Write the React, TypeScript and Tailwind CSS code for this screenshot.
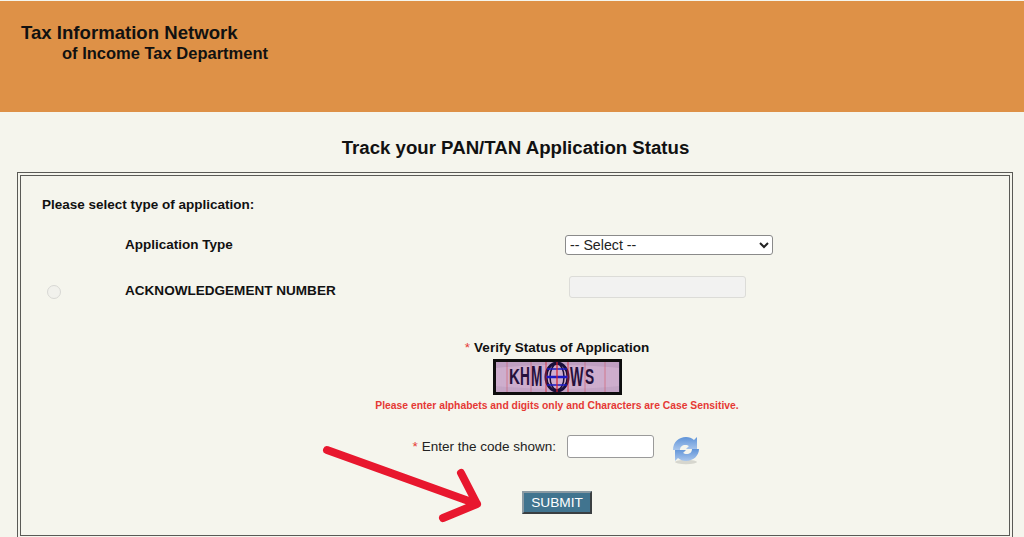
import type { FC } from "react";

const fontStack = "font-['Liberation_Sans',Arial,sans-serif]";

// distorted captcha picture
const Captcha: FC = () => {
  const vLines = Array.from({ length: 62 }, (_, i) => i * 2);
  const hLines = Array.from({ length: 15 }, (_, i) => i * 2);
  const letter = "'Liberation Sans', sans-serif";
  return (
    <svg width="129" height="36" viewBox="0 0 129 36" className="block">
      <rect x="0" y="0" width="129" height="36" fill="#0d0d0d" />
      <rect x="3" y="3" width="123" height="30" fill="#e4d6ea" />
      {vLines.map((x) => (
        <line key={`v${x}`} x1={x + 4} y1="3" x2={x + 4} y2="33" stroke="#8078cc" strokeWidth="0.8" opacity="0.5" />
      ))}
      {hLines.map((y) => (
        <line key={`h${y}`} x1="3" y1={y + 4} x2="126" y2={y + 4} stroke="#c8506c" strokeWidth="0.8" opacity="0.45" />
      ))}
      {[14, 38, 92, 112].map((x) => (
        <line key={`r${x}`} x1={x} y1="3" x2={x} y2="33" stroke="#d8404a" strokeWidth="0.8" opacity="0.6" />
      ))}
      <path d="M3 3H126V9C90 5 40 5 3 9Z" fill="#8d6f98" opacity="0.22" />
      <path d="M3 33H126V27C90 31 40 31 3 27Z" fill="#8d6f98" opacity="0.15" />
      <g fontFamily={letter} fontWeight="700" fill="#26103c">
        <text transform="translate(16 25) scale(0.8 1.15)" fontSize="19">K</text>
        <text transform="translate(27 26) scale(0.72 1.35)" fontSize="19">H</text>
        <text transform="translate(38 27) scale(0.72 1.55)" fontSize="19">M</text>
        <text transform="translate(77 27) scale(0.75 1.5)" fontSize="19">W</text>
        <text transform="translate(92 25) scale(0.72 1.15)" fontSize="19">S</text>
      </g>
      <ellipse cx="64" cy="18" rx="11" ry="14" fill="none" stroke="#1a0f3a" strokeWidth="3" />
      <ellipse cx="64" cy="18" rx="7" ry="13" fill="none" stroke="#1a0f3a" strokeWidth="1.5" />
      <line x1="53" y1="18" x2="75" y2="18" stroke="#1a1ac4" strokeWidth="2.5" />
      <line x1="54" y1="10" x2="74" y2="10" stroke="#1a1ac4" strokeWidth="1.5" />
      <line x1="54" y1="26" x2="74" y2="26" stroke="#1a1ac4" strokeWidth="1.5" />
      <line x1="53" y1="3" x2="53" y2="33" stroke="#d8202a" strokeWidth="0.8" />
      <line x1="64" y1="3" x2="64" y2="33" stroke="#d8202a" strokeWidth="1.2" />
      <line x1="75" y1="3" x2="75" y2="33" stroke="#d8202a" strokeWidth="0.8" />
    </svg>
  );
};

const RefreshIcon: FC = () => (
  <svg width="28" height="30" viewBox="0 0 28 30" className="block">
    <defs>
      <linearGradient id="refreshTop" x1="0" y1="0" x2="0" y2="1">
        <stop offset="0" stopColor="#5f93d8" />
        <stop offset="1" stopColor="#a9c6ec" />
      </linearGradient>
    </defs>
    <ellipse cx="14" cy="27" rx="11" ry="2.2" fill="#8d8d88" opacity="0.3" />
    <path d="M1 15C1 7 7 2 14 2c3 0 6 1 8 3l3-3v12H14l3-3C16 10.500 15 10 13.500 10 10 10 8 12 8 15Z" fill="url(#refreshTop)" />
    <path d="M27 14c0 7-6 12-13 12-3 0-6-1-8-3l-3 3V15h11l-3 3c1 .500 2 1 3.500 1 3.500 0 5.500-2 5.500-5Z" fill="url(#refreshTop)" />
  </svg>
);

const Arrow: FC = () => (
  <svg width="165" height="85" viewBox="0 0 165 85" className="absolute left-[318px] top-[443px]">
    <path
      d="M9 7L159 61M143 30L159 61L125 75"
      fill="none"
      stroke="#e8172e"
      strokeWidth="8"
      strokeLinecap="round"
      strokeLinejoin="round"
    />
  </svg>
);

export default function App() {
  return (
    <div className={`${fontStack} relative h-[537px] w-[1024px] overflow-hidden bg-[#f5f5ed] text-[#111]`}>
      <header className="mt-px h-[111px] bg-[#de9147] pt-[21px] pl-[21px] font-bold">
        <div className="text-[18.6px] leading-[22px]">Tax Information Network</div>
        <div className="pl-[41px] text-[16.5px] leading-[18px]">of Income Tax Department</div>
      </header>

      <h1 className="pt-[25px] pl-[7px] text-center text-[18.65px] font-bold leading-[22px]">Track your PAN/TAN Application Status</h1>

      <div className="mt-[13px] mr-[11px] ml-[17px] h-[367px] border-[4px] border-double border-[#5a5a56] px-[21px] pt-[21px]">
        <div className="text-[13.5px] font-bold leading-[16px]">Please select type of application:</div>

        <div className="mt-[22px] flex h-[20px] items-center">
          <div className="w-[523px] pl-[83px] text-[13.5px] font-bold">Application Type</div>
          <select className="h-[20px] w-[208px] rounded-[3px] border border-[#8a8a8a] bg-white text-[14.2px] text-[#222]">
            <option>-- Select --</option>
          </select>
        </div>

        <div className="mt-[21px] flex h-[24px] items-start">
          <div className="mt-[9px] ml-[5px] h-[14px] w-[14px] rounded-full border border-[#d8d8d4] bg-[#f1f1ec]" />
          <div className="w-[508px] pt-[5px] pl-[64px] text-[13.55px] leading-[20px] font-bold">ACKNOWLEDGEMENT NUMBER</div>
          <div className="h-[22px] w-[177px] rounded-[3px] border border-[#dcdcd8] bg-[#f2f2f1]" />
        </div>

        <div className="mt-[39px] flex flex-col items-center pl-[84px]">
          <div className="text-[13.5px] leading-[17px] font-bold">
            <span className="mr-[4px] font-normal text-[#e53935]">*</span>Verify Status of Application
          </div>
          <div className="mt-[3px]">
            <Captcha />
          </div>
          <div className="mt-[5px] text-[10.35px] leading-[12px] font-bold text-[#e53935]">
            Please enter alphabets and digits only and Characters are Case Sensitive.
          </div>
        </div>

        <div className="mt-[19px] flex h-[30px] items-center">
          <div className="w-[514px] pt-[2px] text-right text-[13.5px] text-[#222]">
            <span className="mr-[4px] text-[#e53935]">*</span>Enter the code shown:
          </div>
          <input className="ml-[11px] h-[23px] w-[87px] rounded-[3px] border border-[#9a9a9a] bg-white" />
          <div className="mt-[8px] ml-[18px]">
            <RefreshIcon />
          </div>
        </div>

        <div className="mt-[30px] flex justify-center pl-[84px]">
          <button className="h-[23px] w-[70px] border-2 border-t-[#8a9aa3] border-r-[#3a3f42] border-b-[#3a3f42] border-l-[#8a9aa3] bg-[#41748f] text-[13.7px] text-white">
            SUBMIT
          </button>
        </div>
      </div>

      <Arrow />
    </div>
  );
}
